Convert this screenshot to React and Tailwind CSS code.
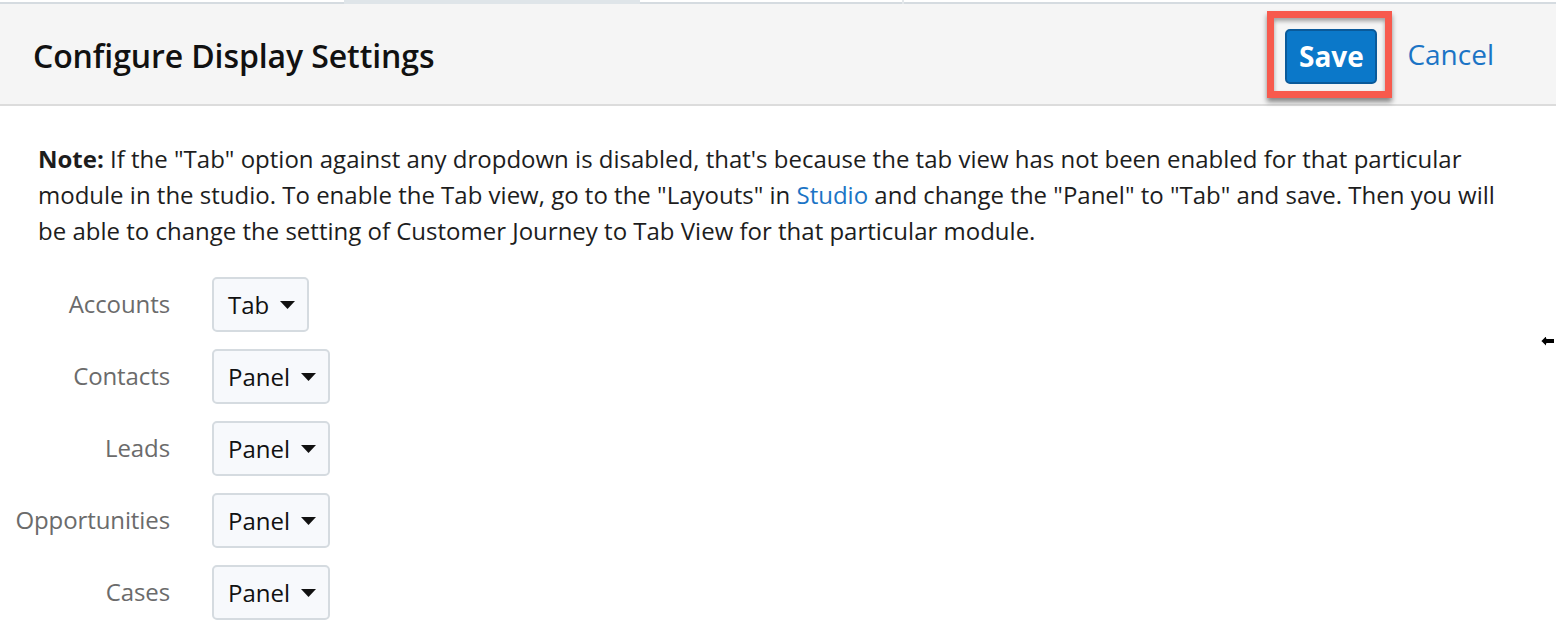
import { useState } from 'react';

const modules = [
    { name: 'Accounts', value: 'Tab' },
    { name: 'Contacts', value: 'Panel' },
    { name: 'Leads', value: 'Panel' },
    { name: 'Opportunities', value: 'Panel' },
    { name: 'Cases', value: 'Panel' },
];

function Caret() {
    return (
        <svg width="15" height="8" viewBox="0 0 15 8" className="shrink-0">
            <path d="M0 0 L15 0 L7.5 8 Z" fill="#111" />
        </svg>
    );
}

export default function App() {
    const [settings] = useState(modules);

    return (
        <div className="w-[1556px] h-[640px] overflow-hidden bg-white font-['Open_Sans',sans-serif] relative">
            {/* top strip */}
            <div className="h-[4px] flex items-end bg-white">
                <div className="h-[2px] w-full bg-[#d5dbe0]" />
            </div>
            <div className="absolute top-0 left-[344px] w-[296px] h-[4px] bg-[#dfe5e9]" />
            <div className="absolute top-0 left-[902px] w-[2px] h-[4px] bg-[#e4e8eb]" />

            {/* header */}
            <div className="h-[102px] bg-[#f5f5f5] border-b-2 border-[#dcdcdc] flex items-center justify-between pl-[33px] pr-[62px]">
                <h1 className="text-[32px] font-semibold text-[#111] tracking-[-0.1px] pt-[3px]">Configure Display Settings</h1>
                <div className="flex items-center gap-[15px]">
                    <div className="border-[7px] border-[#f75a4d] pl-[11px] pt-[11px] pr-[8px] pb-[7px] shadow-[0_4px_5px_rgba(0,0,0,0.45),inset_0_3px_4px_rgba(0,0,0,0.35)]">
                        <button className="w-[92px] h-[55px] bg-[#0b78c9] border-2 border-[#0a5a9a] rounded-[5px] text-white text-[28px] font-bold">
                            Save
                        </button>
                    </div>
                    <a className="text-[28px] text-[#1b74c5]">Cancel</a>
                </div>
            </div>

            {/* body */}
            <div className="pl-[38px] pr-[30px] pt-[35px]">
                <p className="text-[24px] leading-[36px] text-[#1d1d1d] w-[1480px] tracking-[0px]">
                    <span className="font-bold">Note:</span> If the "Tab" option against any dropdown is disabled, that's because the tab view has not been enabled for that particular module in the studio. To enable the Tab view, go to the "Layouts" in <a className="text-[#1b74c5]">Studio</a> and change the "Panel" to "Tab" and save. Then you will be able to change the setting of Customer Journey to Tab View for that particular module.
                </p>
            </div>

            <div className="mt-[28px] flex flex-col gap-[17px]">
                {settings.map((m) => (
                    <div key={m.name} className="flex items-center">
                        <div className="w-[170px] text-right text-[24px] text-[#6b6b6b] tracking-[-0.1px] pb-[1px]">{m.name}</div>
                        <div className="ml-[42px] h-[55px] flex items-center gap-[11px] pl-[14px] pr-[12px] bg-[#f7f9fc] border-2 border-[#d5dbe0] rounded-[5px]">
                            <span className="text-[24px] text-[#111]">{m.value}</span>
                            <Caret />
                        </div>
                    </div>
                ))}
            </div>

            {/* cursor */}
            <svg className="absolute left-[1538px] top-[331px]" width="18" height="20" viewBox="0 0 18 20">
                <path d="M2 10 L9 3 L9 7 L17 7 L17 13 L9 13 L9 17 Z" fill="#000" stroke="#fff" strokeWidth="2" strokeLinejoin="round" />
            </svg>
        </div>
    );
}
